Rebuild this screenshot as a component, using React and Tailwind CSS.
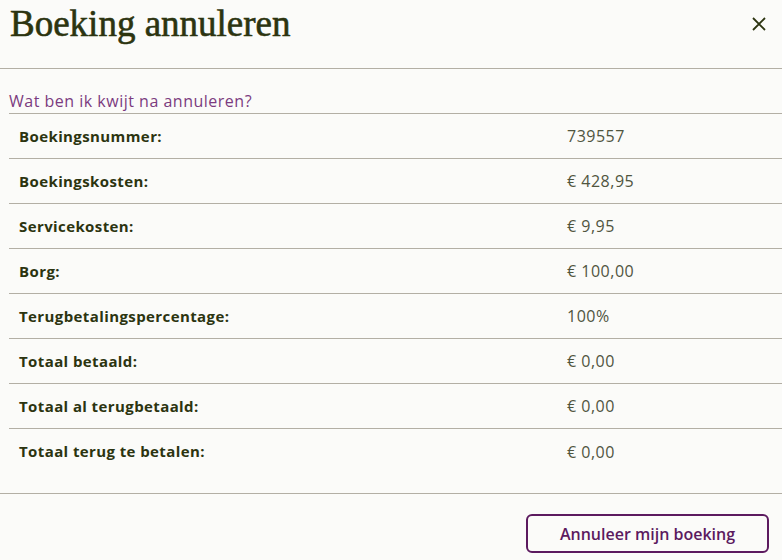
const rows = [
  ['Boekingsnummer:', '739557'],
  ['Boekingskosten:', '€ 428,95'],
  ['Servicekosten:', '€ 9,95'],
  ['Borg:', '€ 100,00'],
  ['Terugbetalingspercentage:', '100%'],
  ['Totaal betaald:', '€ 0,00'],
  ['Totaal al terugbetaald:', '€ 0,00'],
  ['Totaal terug te betalen:', '€ 0,00'],
];

export default function App() {
  return (
    <div className="w-[782px] h-[560px] bg-[#fbfbf9] overflow-hidden" style={{ fontFamily: '"Open Sans", sans-serif' }}>
      <div className="h-[69px] flex items-start justify-between pl-[10px] pr-[16px] pt-[2px] border-b border-[#b3afa5]">
        <h1 className="text-[37px] leading-[44px] text-[#2c3410] font-normal [-webkit-text-stroke:0.6px_#2c3410]" style={{ fontFamily: '"Liberation Serif", serif' }}>
          Boeking annuleren
        </h1>
        <button className="mt-[15px] text-[#2c3410]">
          <svg width="14" height="14" viewBox="0 0 14 14" fill="none" stroke="currentColor" strokeWidth="1.8">
            <path d="M1 1L13 13M13 1L1 13" />
          </svg>
        </button>
      </div>

      <div className="pl-[9px] pt-[21px]">
        <a className="block text-[16px] leading-[23px] tracking-[0.5px] text-[#7b3b80]">Wat ben ik kwijt na annuleren?</a>
        <div className="border-t border-[#b3afa5]">
          {rows.map(([label, value], i) => (
            <div key={label} className={`h-[45px] flex items-center ${i < rows.length - 1 ? 'border-b border-[#b3afa5]' : ''}`}>
              <div className="w-[558px] pl-[10px] text-[15px] font-bold tracking-[0.4px] text-[#2c3410]">{label}</div>
              <div className="text-[16px] tracking-[0.5px] text-[#50553f]">{value}</div>
            </div>
          ))}
        </div>
      </div>

      <div className="mt-[19px] border-t border-[#b3afa5] flex justify-end pr-[13px] pt-[20px]">
        <button className="w-[243px] h-[39px] rounded-[6px] border-2 border-[#5c1a5f] text-[16px] font-semibold text-[#5c1a5f]">
          Annuleer mijn boeking
        </button>
      </div>
    </div>
  );
}
